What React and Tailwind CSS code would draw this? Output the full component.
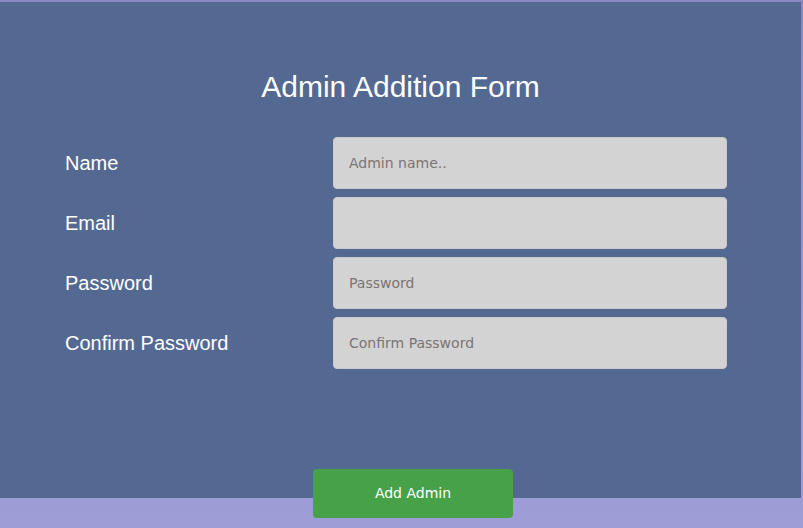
const fields = [
  { label: 'Name', type: 'text', placeholder: 'Admin name..' },
  { label: 'Email', type: 'email', placeholder: '' },
  { label: 'Password', type: 'password', placeholder: 'Password' },
  { label: 'Confirm Password', type: 'password', placeholder: 'Confirm Password' },
];

const App = () => {
  return (
    <div className="min-h-[528px] bg-gradient-to-b from-[#8a87c2] to-[#9f9dd6] pt-[2px] pr-[2px]">
      {/* Form panel */}
      <div className="h-[496px] bg-[#546991] flex flex-col">
        <h1
          className="text-center text-white text-[30px] leading-none mt-[70px] mb-[35px]"
          style={{ fontFamily: '"Liberation Sans", Arial, sans-serif' }}
        >
          Admin Addition Form
        </h1>

        <form className="flex flex-col gap-[8px] pl-[65px]">
          {fields.map((field) => (
            <div key={field.label} className="flex items-center">
              <label
                className="w-[268px] text-white text-[20px]"
                style={{ fontFamily: '"Liberation Sans", Arial, sans-serif' }}
              >
                {field.label}
              </label>
              <input
                type={field.type}
                placeholder={field.placeholder}
                className="w-[394px] h-[52px] px-[15px] bg-[#d3d3d3] border border-[#c9c9cc] rounded-[4px] text-[14px] text-[#333] placeholder:text-[#7a7474] outline-none"
                style={{ fontFamily: '"DejaVu Sans", Verdana, sans-serif' }}
              />
            </div>
          ))}
        </form>

        <div className="flex justify-center pl-[25px] mt-auto -mb-[20px]">
          <button
            type="button"
            className="w-[200px] h-[49px] bg-[#46a149] rounded-[4px] text-white text-[14px]"
            style={{ fontFamily: '"DejaVu Sans", Verdana, sans-serif' }}
          >
            Add Admin
          </button>
        </div>
      </div>
    </div>
  );
};

export default App;
